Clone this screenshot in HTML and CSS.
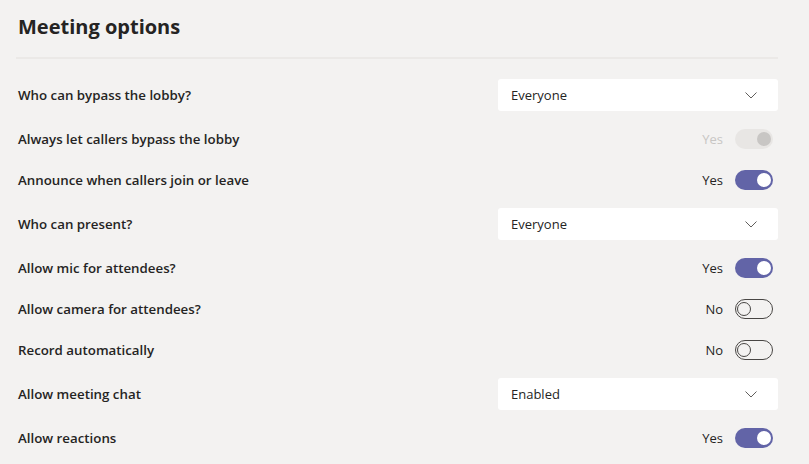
FILE: index.html
```html
<!DOCTYPE html>
<html>
<head>
  <title>Meeting options</title>
  <link rel="stylesheet" href="styles.css">
</head>
<body>
  <div id="page">
    <div id="header">
      <h1 id="title">Meeting options</h1>
    </div>

    <div id="options">
      <div class="option">
        <span class="option-label">Who can bypass the lobby?</span>
        <div class="dropdown">
          <span>Everyone</span>
          <svg class="chevron" width="12" height="7" viewBox="0 0 12 7"><path d="M0.5 0.5 L6 6 L11.5 0.5" fill="none" stroke="#605e5c" stroke-width="1"/></svg>
        </div>
      </div>

      <div class="option toggle-row">
        <span class="option-label">Always let callers bypass the lobby</span>
        <div class="switch-wrap disabled">
          <span class="switch-text">Yes</span>
          <span class="switch on"><span class="knob"></span></span>
        </div>
      </div>

      <div class="option toggle-row">
        <span class="option-label">Announce when callers join or leave</span>
        <div class="switch-wrap">
          <span class="switch-text">Yes</span>
          <span class="switch on"><span class="knob"></span></span>
        </div>
      </div>

      <div class="option">
        <span class="option-label">Who can present?</span>
        <div class="dropdown">
          <span>Everyone</span>
          <svg class="chevron" width="12" height="7" viewBox="0 0 12 7"><path d="M0.5 0.5 L6 6 L11.5 0.5" fill="none" stroke="#605e5c" stroke-width="1"/></svg>
        </div>
      </div>

      <div class="option toggle-row">
        <span class="option-label">Allow mic for attendees?</span>
        <div class="switch-wrap">
          <span class="switch-text">Yes</span>
          <span class="switch on"><span class="knob"></span></span>
        </div>
      </div>

      <div class="option toggle-row">
        <span class="option-label">Allow camera for attendees?</span>
        <div class="switch-wrap">
          <span class="switch-text">No</span>
          <span class="switch off"><span class="knob"></span></span>
        </div>
      </div>

      <div class="option toggle-row">
        <span class="option-label">Record automatically</span>
        <div class="switch-wrap">
          <span class="switch-text">No</span>
          <span class="switch off"><span class="knob"></span></span>
        </div>
      </div>

      <div class="option">
        <span class="option-label">Allow meeting chat</span>
        <div class="dropdown">
          <span>Enabled</span>
          <svg class="chevron" width="12" height="7" viewBox="0 0 12 7"><path d="M0.5 0.5 L6 6 L11.5 0.5" fill="none" stroke="#605e5c" stroke-width="1"/></svg>
        </div>
      </div>

      <div class="option toggle-row">
        <span class="option-label">Allow reactions</span>
        <div class="switch-wrap">
          <span class="switch-text">Yes</span>
          <span class="switch on"><span class="knob"></span></span>
        </div>
      </div>
    </div>
  </div>
</body>
</html>
```

FILE: styles.css
```css
html, body {
  margin: 0;
  padding: 0;
  height: 100%;
}

body {
  background-color: #f3f2f1;
  color: #252423;
  font-family: "Open Sans", "Noto Sans", sans-serif;
  font-size: 13px;
  overflow: hidden;
}

#page {
  padding: 0 31px 0 16px;
}

#header {
  height: 57px;
  border-bottom: 2px solid #ebe9e7;
  display: flex;
  align-items: center;
}

#title {
  margin: 0 0 4px 2px;
  font-size: 20px;
  font-weight: 700;
}

#options {
  display: flex;
  flex-direction: column;
  gap: 15px;
  padding-top: 20px;
}

.option {
  display: flex;
  align-items: center;
  justify-content: space-between;
  height: 32px;
}

.option.toggle-row {
  height: 26px;
}

.option-label {
  font-weight: 600;
  font-size: 13.3px;
  padding-left: 2px;
}

.dropdown {
  width: 280px;
  height: 32px;
  box-sizing: border-box;
  background-color: #ffffff;
  border-radius: 3px;
  padding: 0 21px 0 13px;
  display: flex;
  align-items: center;
  justify-content: space-between;
}

.switch-wrap {
  display: flex;
  align-items: center;
  gap: 12px;
  padding-right: 5px;
}

.switch-text {
  font-size: 13px;
}

.switch {
  width: 38px;
  height: 20px;
  box-sizing: border-box;
  border-radius: 10px;
  display: flex;
  align-items: center;
  padding: 0 2px;
}

.switch .knob {
  width: 14px;
  height: 14px;
  box-sizing: border-box;
  border-radius: 50%;
}

.switch.on {
  background-color: #6264a7;
  justify-content: flex-end;
}

.switch.on .knob {
  background-color: #ffffff;
}

.switch.off {
  border: 1px solid #484644;
  justify-content: flex-start;
  padding: 0 1px;
}

.switch.off .knob {
  border: 1px solid #484644;
}

.switch-wrap.disabled .switch-text {
  color: #c8c6c4;
}

.switch-wrap.disabled .switch {
  background-color: #e8e6e4;
}

.switch-wrap.disabled .knob {
  background-color: #c8c6c4;
}
```
